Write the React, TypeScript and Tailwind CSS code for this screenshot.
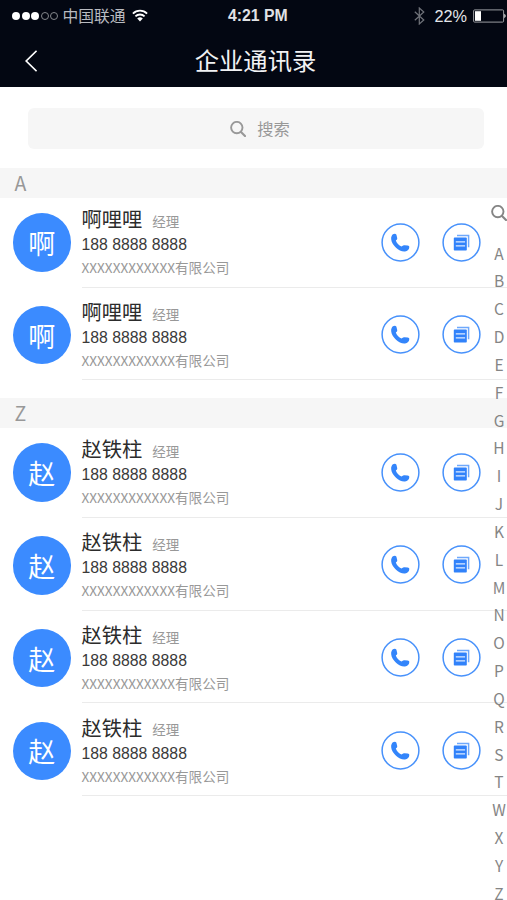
type Contact = { name: string; role: string; phone: string; company: string };

const LATIN = 'font-["Liberation_Sans",sans-serif]';

const ali: Contact = {
  name: "啊哩哩",
  role: "经理",
  phone: "188 8888 8888",
  company: "XXXXXXXXXXXX有限公司",
};
const zhao: Contact = { ...ali, name: "赵铁柱" };

const groups: { letter: string; contacts: Contact[] }[] = [
  { letter: "A", contacts: [ali, ali] },
  { letter: "Z", contacts: [zhao, zhao, zhao, zhao] },
];

const letters = "ABCDEFGHIJKLMNOPQRSTWXYZ".split("");

function SearchIcon({ className }: { className: string }) {
  return (
    <svg viewBox="0 0 16 16" className={className} fill="none" stroke="currentColor" strokeLinecap="round">
      <circle cx="6.8" cy="6.6" r="5.7" strokeWidth="1.9" />
      <path d="M11 11l4 4" strokeWidth="2.1" />
    </svg>
  );
}

function StatusBar() {
  return (
    <div className="relative flex h-8 items-center pl-3">
      <div className="flex gap-[1.6px]">
        {[1, 2, 3, 4, 5].map((n) => (
          <span
            key={n}
            className={`size-[8px] rounded-full ${n <= 3 ? "bg-white" : "border border-[#85888d]"}`}
          />
        ))}
      </div>
      <span className="ml-[4px] text-[15.8px] text-[#b9bbc0]">中国联通</span>
      <svg viewBox="0 0 16 13" className="-mt-px ml-[6px] h-[13px] w-4" fill="none" stroke="#fff">
        <path d="M.9 4.6a10 10 0 0 1 14.2 0" strokeWidth="1.8" />
        <path d="M3.4 7.4a6.5 6.5 0 0 1 9.2 0" strokeWidth="1.8" />
        <path d="M8 12.4L5.2 9.6a4 4 0 0 1 5.6 0z" fill="#fff" stroke="none" />
      </svg>

      <span className={`absolute left-[228px] text-[15.8px] font-bold text-[#e0e2e5] ${LATIN}`}>4:21 PM</span>

      <div className="ml-auto flex items-center">
        <svg viewBox="0 0 11 18" className="h-[18px] w-[11px]" fill="none" stroke="#70737a" strokeWidth="1.2">
          <path d="M.8 4.8l9 8.2-4.5 4V1l4.5 4-9 8.2" />
        </svg>
        <span className={`ml-[9px] text-[16.3px] text-[#e4e6ea] ${LATIN}`}>22%</span>
        <svg viewBox="0 0 34 14" className="-mt-px ml-[6px] h-[14px] w-[34px]" fill="none">
          <rect x=".6" y=".9" width="30" height="12.2" rx="1" stroke="#9a9ca1" strokeWidth="1" />
          <rect x="2" y="2.2" width="6" height="9.6" fill="#fff" />
          <path d="M31.4 4.8q2.4 2.2 0 4.4z" fill="#fff" />
        </svg>
      </div>
    </div>
  );
}

function Header() {
  return (
    <header className="h-[87px] bg-[#030712]">
      <StatusBar />
      <div className="relative flex h-[58px] items-center justify-center pl-1">
        <svg viewBox="0 0 12 22" className="absolute left-[25px] top-[18px] h-[22px] w-3" fill="none" stroke="#fff" strokeWidth="1.7">
          <path d="M11.6 .8L1.2 11l10.4 10.2" />
        </svg>
        <h1 className="-mt-px text-[24.3px] leading-none text-[#f1f2f4]">企业通讯录</h1>
      </div>
    </header>
  );
}

function PhoneButton() {
  return (
    <button>
      <svg viewBox="0 0 39 39" className="size-[39px]" fill="none">
        <circle cx="19.5" cy="19.5" r="18.4" stroke="#4791fb" strokeWidth="1.5" />
        <path
          transform="translate(9.4 10) scale(.97)"
          fill="#3385fb"
          d="M1.3 3.1C1.9 1.6 3.3.7 4.7.8c1 .1 1.5.7 1.7 1.7l.6 2.7c.2 1-.2 1.6-.9 2.1l-.5.5c.6 2.5 3.2 5.2 5.8 6l.9-.5c.6-.6 1.3-.8 2.2-.7l3.3.2c1.1.1 1.7.7 1.7 1.7 0 2.4-1.9 4.3-4.4 4.5-3.1.4-6.7-1.5-9.3-3.9C3.2 12.8 1 9.6.8 6.5.6 5.2.8 4 1.3 3.1z"
        />
      </svg>
    </button>
  );
}

function CardButton() {
  return (
    <button>
      <svg viewBox="0 0 39 39" className="size-[39px]" fill="none">
        <circle cx="19.5" cy="19.5" r="18.4" stroke="#4791fb" strokeWidth="1.5" />
        <g transform="translate(11.8 11.8)">
          <path d="M3.2.7h11.6v11.8" stroke="#6fa9fc" strokeWidth="1.5" />
          <rect x="0" y="2.8" width="13" height="13" rx=".8" fill="#3182fa" />
          <path d="M2 7.1h9.3M2 11.1h9.3" stroke="#dceaff" strokeWidth="1.2" />
        </g>
      </svg>
    </button>
  );
}

function ContactRow({ contact }: { contact: Contact }) {
  return (
    <li className="flex h-[92.8px] items-end pl-[12.5px] first:h-[89.6px]">
      <div className="mb-[16px] flex size-[58.5px] shrink-0 items-center justify-center rounded-full bg-[#3b8bff] text-[27px] leading-none text-white">
        {contact.name[0]}
      </div>
      <div className="ml-[11px] flex h-[89.6px] flex-1 items-start border-b border-[#ebebeb]">
        <div className="-ml-[0.5px] pt-[7px]">
          <div className="flex h-[27px] items-center">
            <span className="text-[20.3px] text-[#2c2c2c]">{contact.name}</span>
            <span className="ml-[10px] pt-[5px] text-[13.5px] text-[#989898]">{contact.role}</span>
          </div>
          <div className={`h-[24px] text-[15.8px] leading-[25px] text-[#3a3a3a] ${LATIN}`}>{contact.phone}</div>
          <div className="h-[22px] text-[13.6px] leading-[23px] text-[#989898]">{contact.company}</div>
        </div>
        <div className="ml-auto mr-[26.5px] flex gap-[22px] pt-[24.5px]">
          <PhoneButton />
          <CardButton />
        </div>
      </div>
    </li>
  );
}

// Letter strip on the right edge, floating above the list
function IndexBar() {
  return (
    <nav className="absolute right-0 top-[205px] flex w-4 flex-col items-center text-[#858585]">
      <SearchIcon className="size-4" />
      <ul className="mt-[18.5px]">
        {letters.map((l) => (
          <li key={l} className="flex h-[27.83px] items-center justify-center text-[15.5px] leading-none">
            {l}
          </li>
        ))}
      </ul>
    </nav>
  );
}

export default function App() {
  return (
    <div className='relative h-[900px] w-[507px] overflow-hidden bg-white font-["Noto_Sans_CJK_SC",sans-serif]'>
      <Header />

      <div className="pt-[21px] pr-[23px] pb-[19px] pl-7">
        <div className="flex h-[41px] items-center justify-center rounded-md bg-[#f6f6f6] pl-2 text-[#989898]">
          <SearchIcon className="size-4" />
          <span className="ml-[11px] text-[16.3px]">搜索</span>
        </div>
      </div>

      {groups.map((g) => (
        <section key={g.letter} className="mb-[17.8px]">
          <h2 className="flex h-[30px] items-center bg-[#f6f6f6] pb-px pl-[14.5px] text-[19.5px] leading-none text-[#989898]">
            {g.letter}
          </h2>
          <ul>
            {g.contacts.map((c, i) => (
              <ContactRow key={i} contact={c} />
            ))}
          </ul>
        </section>
      ))}

      <IndexBar />
    </div>
  );
}
